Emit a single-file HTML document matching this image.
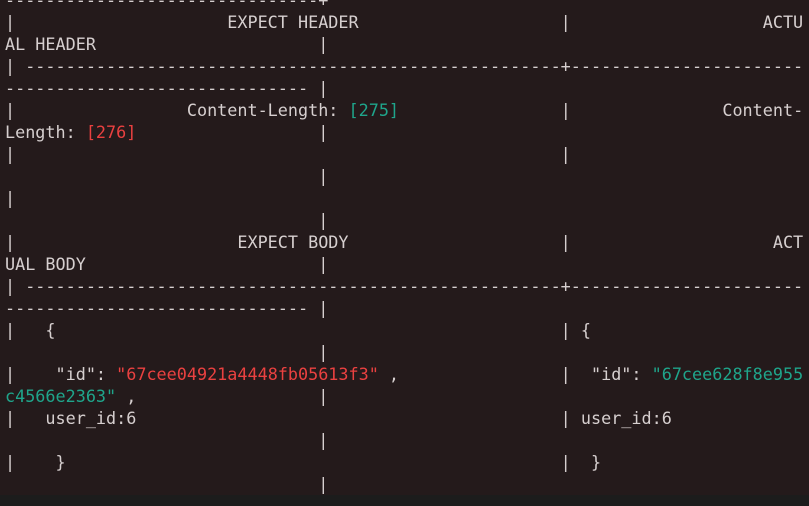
<!DOCTYPE html>
<html><head><meta charset="utf-8"><style>
html,body{margin:0;padding:0;width:809px;height:506px;overflow:hidden;background:#241a1b;}
pre{position:absolute;left:5px;top:-11px;margin:0;font-family:"DejaVu Sans Mono","Liberation Mono",monospace;font-size:16.8px;line-height:22px;color:#d6cfcf;white-space:pre;}
.r{color:#ea4140}.g{color:#1fa58b}
.bot{position:absolute;left:0;top:495px;width:809px;height:11px;background:#1c1c1c;}
</style></head><body>
<pre>-------------------------------+
|                     EXPECT HEADER                    |                   ACTU
AL HEADER                      |
| -----------------------------------------------------+-----------------------
------------------------------ |
|                 Content-Length: <span class="g">[275]</span>                |               Content-
Length: <span class="r">[276]</span>                  |
|                                                      |
                               |
|
                               |
|                      EXPECT BODY                     |                    ACT
UAL BODY                       |
| -----------------------------------------------------+-----------------------
------------------------------ |
|   {                                                  | {
                               |
|    "id": <span class="r">"67cee04921a4448fb05613f3"</span> ,                |  "id": <span class="g">"67cee628f8e955</span>
<span class="g">c4566e2363"</span> ,                  |
|   user_id:6                                          | user_id:6
                               |
|    }                                                 |  }
                               |</pre>
<div class="bot"></div>
</body></html>
